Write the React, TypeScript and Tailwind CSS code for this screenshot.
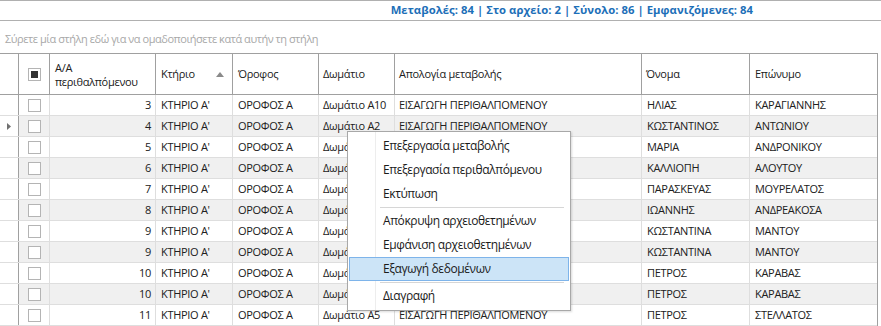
import React from "react";

const rows: [string, string, string, string][] = [
  ["3", "Δωμάτιο A10", "ΗΛΙΑΣ", "ΚΑΡΑΓΙΑΝΝΗΣ"],
  ["4", "Δωμάτιο A2", "ΚΩΣΤΑΝΤΙΝΟΣ", "ΑΝΤΩΝΙΟΥ"],
  ["5", "Δωμάτιο A3", "ΜΑΡΙΑ", "ΑΝΔΡΟΝΙΚΟΥ"],
  ["6", "Δωμάτιο A4", "ΚΑΛΛΙΟΠΗ", "ΑΛΟΥΤΟΥ"],
  ["7", "Δωμάτιο A6", "ΠΑΡΑΣΚΕΥΑΣ", "ΜΟΥΡΕΛΑΤΟΣ"],
  ["8", "Δωμάτιο A7", "ΙΩΑΝΝΗΣ", "ΑΝΔΡΕΑΚΟΣΑ"],
  ["9", "Δωμάτιο A8", "ΚΩΣΤΑΝΤΙΝΑ", "ΜΑΝΤΟΥ"],
  ["9", "Δωμάτιο A8", "ΚΩΣΤΑΝΤΙΝΑ", "ΜΑΝΤΟΥ"],
  ["10", "Δωμάτιο A9", "ΠΕΤΡΟΣ", "ΚΑΡΑΒΑΣ"],
  ["10", "Δωμάτιο A9", "ΠΕΤΡΟΣ", "ΚΑΡΑΒΑΣ"],
  ["11", "Δωμάτιο A5", "ΠΕΤΡΟΣ", "ΣΤΕΛΛΑΤΟΣ"],
];

function Checkbox({ checked }: { checked?: boolean }) {
  return (
    <div className="w-[13px] h-[13px] border border-[#b4b4b4] bg-white flex items-center justify-center">
      {checked && <div className="w-[7px] h-[7px] bg-[#333]" />}
    </div>
  );
}

const menuItems: (string | null)[] = [
  "Επεξεργασία μεταβολής",
  "Επεξεργασία περιθαλπόμενου",
  "Εκτύπωση",
  null,
  "Απόκρυψη αρχειοθετημένων",
  "Εμφάνιση αρχειοθετημένων",
  "Εξαγωγή δεδομένων",
  null,
  "Διαγραφή",
];

const hc = "border-r border-[#a0a0a0] flex items-center";
const rc = "border-r border-[#dedede] flex items-center whitespace-nowrap";

export default function App() {
  return (
    <div className="relative w-[881px] h-[326px] bg-white overflow-hidden text-[11px] tracking-[-0.3px] text-[#202020] font-['Open_Sans','Noto_Sans',sans-serif]">
      <div className="h-[1px] bg-[#b0b0b0]" />
      <div className="h-[20px] flex items-center justify-end pr-[128px] border-b border-[#b0b0b0]">
        <span className="text-[11.3px] font-bold text-[#1d6fb8] tracking-[0.05px]">
          Μεταβολές: 84 | Στο αρχείο: 2 | Σύνολο: 86 | Εμφανιζόμενες: 84
        </span>
      </div>
      <div className="h-[32px] flex items-center pl-[5px] text-[#a8a8a8] pt-[4px] tracking-[-0.45px]">
        Σύρετε μία στήλη εδώ για να ομαδοποιήσετε κατά αυτήν τη στήλη
      </div>
      <div className="w-[878px] border-t border-r border-[#a0a0a0]">
        <div className="flex h-[41px] border-b border-[#a0a0a0]">
          <div className={`w-[19px] ${hc}`} />
          <div className={`w-[31px] ${hc} justify-center`}>
            <Checkbox checked />
          </div>
          <div className="w-[106px] border-r border-[#a0a0a0] flex flex-col justify-center pl-[5px] pt-[2px] leading-[14px]">
            <span>A/A</span>
            <span>περιθαλπόμενου</span>
          </div>
          <div className={`w-[77px] ${hc} justify-between pl-[5px] pr-[8px]`}>
            <span>Κτήριο</span>
            <svg width="8" height="5" viewBox="0 0 8 5">
              <path d="M0 5 L4 0 L8 5 Z" fill="#8a8a8a" />
            </svg>
          </div>
          <div className={`w-[86px] ${hc} pl-[5px]`}>Όροφος</div>
          <div className={`w-[76px] ${hc} pl-[4px]`}>Δωμάτιο</div>
          <div className={`w-[247px] ${hc} pl-[4px]`}>Απολογία μεταβολής</div>
          <div className={`w-[108px] ${hc} pl-[4px]`}>Όνομα</div>
          <div className="w-[126px] flex items-center pl-[5px]">Επώνυμο</div>
        </div>
        {rows.map((r, i) => (
          <div
            key={i}
            className={`flex h-[21px] border-b border-[#dedede] ${i % 2 === 1 ? "bg-[#f0f0f0]" : "bg-white"}`}
          >
            <div className="w-[19px] bg-white border-r border-[#a0a0a0] flex items-center justify-center">
              {i === 1 && (
                <svg width="4" height="7" viewBox="0 0 4 7">
                  <path d="M0 0 L4 3.5 L0 7 Z" fill="#707070" />
                </svg>
              )}
            </div>
            <div className={`w-[31px] ${rc} justify-center`}>
              <Checkbox />
            </div>
            <div className={`w-[106px] ${rc} justify-end pr-[4px]`}>{r[0]}</div>
            <div className={`w-[77px] ${rc} pl-[5px]`}>ΚΤΗΡΙΟ Α'</div>
            <div className={`w-[86px] ${rc} pl-[5px]`}>ΟΡΟΦΟΣ Α</div>
            <div className={`w-[76px] ${rc} pl-[4px]`}>{r[1]}</div>
            <div className={`w-[247px] ${rc} pl-[4px]`}>ΕΙΣΑΓΩΓΗ ΠΕΡΙΘΑΛΠΟΜΕΝΟΥ</div>
            <div className={`w-[108px] ${rc} pl-[5px]`}>{r[2]}</div>
            <div className="w-[126px] flex items-center pl-[5px]">{r[3]}</div>
          </div>
        ))}
      </div>

      <div className="absolute left-[347px] top-[131px] w-[224px] bg-white border border-[#a8a8a8] shadow-[1px_1px_2px_rgba(0,0,0,0.15)] py-[2px] text-[12px] tracking-[-0.4px] text-[#1a1a1a]">
        <div className="absolute left-[27px] top-0 bottom-0 w-px bg-[#ededed]" />
        {menuItems.map((m, i) =>
          m === null ? (
            <div key={i} className="h-[3px] flex items-center pl-[32px] pr-[6px]">
              <div className="h-px w-full bg-[#d6d6d6]" />
            </div>
          ) : m === "Εξαγωγή δεδομένων" ? (
            <div
              key={i}
              className="relative h-[24px] mx-px flex items-center pl-[33px] bg-[#cce4f7] border border-[#7eb4ea]"
            >
              {m}
            </div>
          ) : (
            <div key={i} className="relative h-[24px] mx-px flex items-center pl-[34px]">
              {m}
            </div>
          )
        )}
      </div>
    </div>
  );
}
